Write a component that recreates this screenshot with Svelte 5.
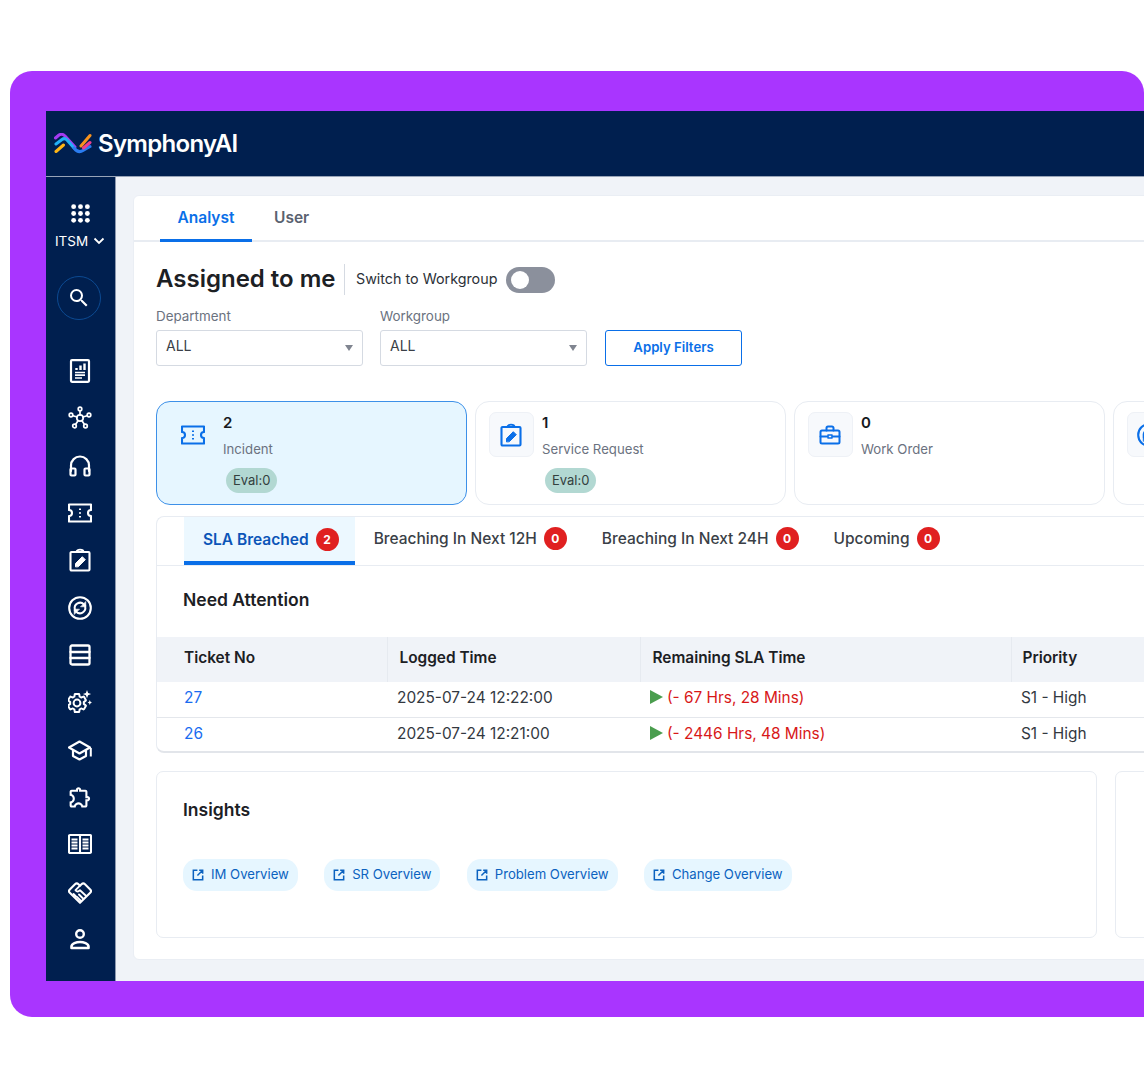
<script>
	const railIcons = ['report', 'hub', 'headset', 'ticket', 'edit', 'sync', 'rows', 'gear', 'school', 'puzzle', 'book', 'hands', 'person'];

	const stats = [
		{ count: 2, label: 'Incident', icon: 'ticket', evalCount: 0, active: true },
		{ count: 1, label: 'Service Request', icon: 'edit', evalCount: 0 },
		{ count: 0, label: 'Work Order', icon: 'case' },
		{ icon: 'sync' }
	];

	const slaTabs = [
		{ label: 'SLA Breached', count: 2 },
		{ label: 'Breaching In Next 12H', count: 0 },
		{ label: 'Breaching In Next 24H', count: 0 },
		{ label: 'Upcoming', count: 0 }
	];

	const tickets = [
		{ no: 27, logged: '2025-07-24 12:22:00', remaining: '(- 67 Hrs, 28 Mins)', priority: 'S1 - High' },
		{ no: 26, logged: '2025-07-24 12:21:00', remaining: '(- 2446 Hrs, 48 Mins)', priority: 'S1 - High' }
	];

	const links = ['IM Overview', 'SR Overview', 'Problem Overview', 'Change Overview'];

	let activeTab = $state('SLA Breached');
	let workgroup = $state(false);
</script>

{#snippet icon(name)}
	<svg class="icon" viewBox="0 0 24 24" fill="none" stroke="currentColor" stroke-width="2" stroke-linejoin="round" stroke-linecap="round">
		{#if name === 'report'}
			<rect x="3" y="1.2" width="18" height="21.6" rx="1" stroke-width="2.2" />
			<path d="M7 13.5h10M7 16.2h10M7 19h7" stroke-width="1.7" stroke-linecap="butt" />
			<path d="M8.5 11V9M12.5 11V6.5M16.5 11V4.5" stroke-width="2.4" stroke-linecap="butt" />
		{:else if name === 'hub'}
			<g stroke-width="1.7">
				<circle cx="12" cy="12" r="3.2" />
				<circle cx="12" cy="3" r="1.8" />
				<circle cx="3" cy="9" r="1.8" />
				<circle cx="21" cy="9" r="1.8" />
				<circle cx="6.5" cy="20" r="1.8" />
				<circle cx="17.5" cy="20" r="1.8" />
				<path d="M12 5v4M5 9.7l4 1.3M19 9.7l-4 1.3M7.7 18.3l2.5-3.700M16.3 18.300l-2.500-3.700" />
			</g>
		{:else if name === 'headset'}
			<path d="M3 17v-5.500a9 9 0 0 1 18 0V17" stroke-width="2.2" />
			<rect x="2.5" y="14.5" width="5" height="7" rx="1" stroke-width="2.2" />
			<rect x="16.5" y="14.5" width="5" height="7" rx="1" stroke-width="2.2" />
		{:else if name === 'ticket'}
			<path d="M1 3.5h22V9a3 3 0 0 0 0 6v5.500H1V15a3 3 0 0 0 0-6z" stroke-width="2.1" />
			<path d="M12 7.5v1.500M12 11.300v1.500M12 15v1.500" stroke-linecap="butt" />
		{:else if name === 'edit'}
			<rect x="2.5" y="4" width="19" height="18.5" rx="1" stroke-width="2.1" />
			<path d="M8.5 4c0-3.200 7-3.200 7 0" stroke-width="1.8" />
			<path d="M7.5 18.500v-3l6.800-6.800 3 3-6.800 6.800z" fill="currentColor" stroke-width="1" />
		{:else if name === 'sync'}
			<circle cx="12" cy="12" r="10.8" stroke-width="2.1" />
			<path d="M6.800 13.200a5.400 5.400 0 0 1 9-5l1.400 1.500M17.200 10.800a5.400 5.400 0 0 1-9 5l-1.400-1.500" stroke-width="2" />
			<path d="M17.800 5.800v5h-5zM6.200 18.200v-5h5z" fill="currentColor" stroke-width="0.6" />
		{:else if name === 'rows'}
			<rect x="2.5" y="2.5" width="19" height="19" rx="1.5" stroke-width="2.3" />
			<path d="M2.500 9h19M2.500 15h19" stroke-width="2.3" />
		{:else if name === 'gear'}
			<path transform="translate(-2.400 1.600) scale(.95)" stroke-width="2.1" d="M19.140 12.940c.04-.3.06-.61.06-.94 0-.32-.02-.64-.07-.94l2.030-1.580a.49.49 0 0 0 .12-.61l-1.920-3.320a.488.488 0 0 0-.59-.22l-2.390.96c-.5-.38-1.030-.7-1.620-.94l-.36-2.540a.484.484 0 0 0-.48-.41h-3.840c-.24 0-.43.17-.47.41l-.36 2.540c-.59.24-1.130.57-1.620.94l-2.390-.96c-.22-.08-.47 0-.59.22L2.740 8.870c-.12.21-.08.47.12.61l2.030 1.580c-.05.3-.09.63-.09.94s.02.64.07.94l-2.030 1.580a.49.49 0 0 0-.12.61l1.920 3.320c.12.22.37.29.59.22l2.390-.96c.5.38 1.030.7 1.620.94l.36 2.540c.05.24.24.41.48.41h3.840c.24 0 .44-.17.47-.41l.36-2.540c.59-.24 1.130-.56 1.620-.94l2.390.96c.22.08.47 0 .59-.22l1.920-3.320c.12-.22.07-.47-.12-.61l-2.010-1.580zM12 15.600c-1.980 0-3.600-1.620-3.600-3.600s1.620-3.600 3.600-3.600 3.600 1.620 3.600 3.600-1.620 3.600-3.600 3.600z" />
			<path d="M19 0l1.100 3 3 1.100-3 1.100-1.100 3-1.100-3-3-1.100 3-1.100zM21.800 10l.7 1.800 1.500.7-1.500.7-.7 1.800-.7-1.800-1.500-.7 1.500-.7z" fill="currentColor" stroke="none" />
		{:else if name === 'school'}
			<path d="M11.500 3.500 1 9.500l10.500 6 10.500-6z" stroke-width="2.2" />
			<path d="M5 12.500v5.500l6.500 3.500L18 18v-5.500" stroke-width="2.2" />
			<path d="M22.800 10v8.500" stroke-width="2" stroke-linecap="butt" />
		{:else if name === 'puzzle'}
			<path fill="currentColor" stroke="none" d="M10.500 4.500c.28 0 .5.22.5.5v2h6v6h2c.28 0 .5.22.5.5s-.22.5-.5.5h-2v6h-2.120c-.68-1.750-2.390-3-4.380-3s-3.700 1.250-4.380 3H4v-2.120c1.750-.68 3-2.390 3-4.380 0-1.990-1.240-3.700-2.990-4.380L4 7h6V5c0-.28.22-.5.5-.5m0-2C9.120 2.500 8 3.620 8 5H4c-1.100 0-1.990.9-1.990 2v3.800h.29c1.490 0 2.700 1.210 2.700 2.700s-1.210 2.700-2.700 2.700H2V20c0 1.100.9 2 2 2h3.800v-.3c0-1.490 1.210-2.700 2.700-2.700s2.700 1.210 2.700 2.700v.3H17c1.100 0 2-.9 2-2v-4c1.380 0 2.500-1.120 2.500-2.500S20.380 11 19 11V7c0-1.100-.9-2-2-2h-4c0-1.380-1.120-2.500-2.500-2.500z" transform="translate(-.5 -.5) scale(1.050)" />
		{:else if name === 'book'}
			<rect x="1" y="3" width="22" height="18" rx="1" stroke-width="2.1" />
			<path d="M12 3v18" stroke-width="2.1" />
			<path d="M3.500 7.500h6M3.500 10.500h6M3.500 13.500h6M3.500 16.500h6M14.500 7.500h6M14.500 10.500h6M14.500 13.500h6M14.500 16.500h6" stroke-width="1.8" stroke-linecap="butt" />
		{:else if name === 'hands'}
			<path d="M12 22.800 1.800 12.800c-1-1-1-2.300 0-3.300L7 4.200c1-1 2.500-1 3.500 0L12 5.700l1.500-1.500c1-1 2.500-1 3.500 0l5.200 5.300c1 1 1 2.300 0 3.300z" stroke-width="2.1" />
			<path d="M12 5.700 7.500 10.200c1.500 2 3 1.500 4.500 0l6.200 5.800M15 18.500l-4-4M12.500 20.500l-3.500-3.500M8 16.500 5.500 14" stroke-width="1.9" />
		{:else if name === 'person'}
			<circle cx="12" cy="7" r="3.8" stroke-width="2.4" />
			<path d="M3.500 21v-1.500c0-3 5-4.500 8.500-4.500s8.500 1.500 8.500 4.500V21z" stroke-width="2.6" />
		{:else if name === 'case'}
			<rect x="2.5" y="7.5" width="19" height="13" rx="1.5" />
			<path d="M8.500 7.500V5a1.500 1.500 0 0 1 1.500-1.500h4A1.500 1.500 0 0 1 15.500 5v2.500M2.500 13.500h6.500M15 13.500h6.500" />
			<rect x="10" y="12" width="4" height="3" stroke-width="1.6" />
		{/if}
	</svg>
{/snippet}

<div class="frame">
	<div class="app">
		<header class="topbar">
			<svg class="logo" viewBox="0 0 38 22" fill="none" stroke-width="3" stroke-linecap="round" stroke-linejoin="round">
				<path d="M1.500 5 5 2c2-1.200 4-1 6 1l10 11" stroke="#a33bf0" />
				<path d="M2 11l6-4.500c2-1.500 3.500-1 5 .5l7 8" stroke="#22b0f5" />
				<path d="M20 15c3 4 6 4.500 9 2.500l7-4" stroke="#2a7cf0" />
				<path d="M2 18.500l7.500-6.500" stroke="#fdb515" />
				<path d="M27 13 36 2.500" stroke="#f7931e" />
				<path d="M29.500 15 36 9.500" stroke="#ec3e8f" />
			</svg>
			<span class="brand">SymphonyAI</span>
		</header>
		<div class="body">
			<nav class="rail">
				<svg class="apps" viewBox="0 0 18 18" fill="#fff">
					{#each [2.5, 9, 15.5] as cy}
						{#each [2.5, 9, 15.5] as cx}
							<circle {cx} {cy} r="2.3" />
						{/each}
					{/each}
				</svg>
				<div class="module">
					ITSM
					<svg viewBox="0 0 12 8" fill="none" stroke="#fff" stroke-width="1.8"><path d="M1.500 1.500 6 6l4.500-4.500" /></svg>
				</div>
				<div class="search">
					<svg viewBox="0 0 24 24" fill="#fff"><path d="M15.500 14h-.79l-.28-.27A6.471 6.471 0 0 0 16 9.500 6.500 6.500 0 1 0 9.500 16c1.610 0 3.090-.59 4.230-1.570l.27.28v.79l5 4.990L20.490 19l-4.990-5zm-6 0C7.010 14 5 11.990 5 9.500S7.010 5 9.500 5 14 7.010 14 9.500 11.990 14 9.500 14z" /></svg>
				</div>
				<ul class="rail-list">
					{#each railIcons as name}
						<li>{@render icon(name)}</li>
					{/each}
				</ul>
			</nav>

			<main class="main">
				<section class="sheet">
					<div class="role-tabs">
						<button class="role-tab active">Analyst</button>
						<button class="role-tab">User</button>
					</div>

					<div class="content">
						<div class="heading">
							<h1>Assigned to me</h1>
							<span class="switch-label">Switch to Workgroup</span>
							<button class="toggle" class:on={workgroup} aria-label="Switch to Workgroup" onclick={() => (workgroup = !workgroup)}><i></i></button>
						</div>

						<div class="filters">
							<div class="field">
								<span>Department</span>
								<div class="select">ALL</div>
							</div>
							<div class="field">
								<span>Workgroup</span>
								<div class="select">ALL</div>
							</div>
							<button class="apply">Apply Filters</button>
						</div>

						<div class="stats">
							{#each stats as stat}
								<div class="stat" class:active={stat.active}>
									<div class="stat-icon">{@render icon(stat.icon)}</div>
									{#if stat.label}
										<div class="stat-text">
											<strong>{stat.count}</strong>
											<span>{stat.label}</span>
											{#if stat.evalCount !== undefined}
												<em>Eval:{stat.evalCount}</em>
											{/if}
										</div>
									{/if}
								</div>
							{/each}
						</div>

						<div class="panel">
							<div class="sla-tabs">
								{#each slaTabs as tab}
									<button class="sla-tab" class:active={activeTab === tab.label} onclick={() => (activeTab = tab.label)}>
										{tab.label}
										<b>{tab.count}</b>
									</button>
								{/each}
							</div>
							<h2>Need Attention</h2>
							<table>
								<thead>
									<tr>
										<th>Ticket No</th>
										<th>Logged Time</th>
										<th>Remaining SLA Time</th>
										<th>Priority</th>
									</tr>
								</thead>
								<tbody>
									{#each tickets as t}
										<tr>
											<td><a href="#{t.no}">{t.no}</a></td>
											<td>{t.logged}</td>
											<td class="late"><i></i>{t.remaining}</td>
											<td>{t.priority}</td>
										</tr>
									{/each}
								</tbody>
							</table>
						</div>

						<div class="lower">
							<div class="insights">
								<h2>Insights</h2>
								<div class="links">
									{#each links as link}
										<span class="link">
											<svg viewBox="0 0 24 24" fill="none" stroke="currentColor" stroke-width="2.6"><path d="M11 4H4v16h16v-7M14 4h6v6M20 4l-9 9" /></svg>
											{link}
										</span>
									{/each}
								</div>
							</div>
							<div class="insights side"></div>
						</div>
					</div>
				</section>
			</main>
		</div>
	</div>
</div>

<style>
	:global(body) {
		margin: 0;
		background: #fff;
		overflow: hidden;
	}

	.frame {
		box-sizing: border-box;
		width: 1134px;
		height: 946px;
		margin: 71px 0 0 10px;
		padding: 40px 0 36px 36px;
		background: #a935ff;
		border-radius: 22px 22px 0 22px;
		overflow: hidden;
		font-family: Inter, 'Liberation Sans', sans-serif;
		color: #1c2024;
	}

	.app {
		height: 870px;
		display: flex;
		flex-direction: column;
		overflow: hidden;
	}

	.topbar {
		flex: none;
		box-sizing: border-box;
		height: 66px;
		padding-left: 8px;
		display: flex;
		align-items: center;
		background: #001f4f;
		border-bottom: 1px solid #98a4b8;
	}

	.logo {
		width: 38px;
		height: 22px;
		margin-right: 6px;
	}

	.brand {
		font-size: 24px;
		font-weight: 600;
		letter-spacing: -0.7px;
		color: #fff;
	}

	.body {
		flex: 1;
		display: flex;
		min-height: 0;
	}

	.rail {
		flex: none;
		box-sizing: border-box;
		width: 70px;
		padding: 27px 1px 0 0;
		display: flex;
		flex-direction: column;
		align-items: center;
		background: #001f4f;
		border-right: 1px solid #8d99b0;
		color: #fff;
	}

	.apps {
		width: 19px;
		height: 19px;
		flex: none;
	}

	.module {
		display: flex;
		align-items: center;
		gap: 5px;
		margin-top: 10px;
		font-size: 13.5px;
		line-height: 16px;
	}

	.module svg {
		width: 12px;
		height: 8px;
	}

	.search {
		box-sizing: border-box;
		width: 44px;
		height: 44px;
		margin: 27px 3px 0 0;
		display: flex;
		align-items: center;
		justify-content: center;
		border: 1px solid #0c4a92;
		border-radius: 50%;
	}

	.search svg {
		width: 24px;
		height: 24px;
	}

	.rail-list {
		list-style: none;
		margin: 27.5px 0 0;
		padding: 0;
	}

	.rail-list li {
		height: 47.33px;
		display: flex;
		align-items: center;
		justify-content: center;
	}

	.icon {
		width: 24px;
		height: 24px;
	}

	.main {
		flex: 1;
		min-width: 0;
		padding: 18px 0 21px 18px;
		background: #f0f3f8;
	}

	.sheet {
		box-sizing: border-box;
		width: 1100px;
		height: 100%;
		margin-left: -1px;
		background: #fff;
		border-radius: 6px;
		border: 1px solid #eaeef4;
	}

	.role-tabs {
		height: 46px;
		padding-left: 26px;
		display: flex;
		gap: 22px;
		border-bottom: 2px solid #e8ecf2;
		box-sizing: border-box;
	}

	.role-tab {
		padding: 0;
		border: 0;
		border-bottom: 3px solid transparent;
		margin-bottom: -2px;
		background: none;
		font: 600 15.5px/1 Inter, sans-serif;
		color: #5a6270;
		cursor: pointer;
	}

	.role-tab.active {
		width: 92px;
		color: #0a6fe8;
		border-bottom-color: #0a6fe8;
	}

	.content {
		padding: 22px 0 0 22px;
	}

	.heading {
		display: flex;
		align-items: center;
		height: 31px;
	}

	h1 {
		box-sizing: border-box;
		width: 189px;
		height: 31px;
		margin: 0;
		border-right: 1px solid #d5dae2;
		font-size: 24px;
		font-weight: 600;
		line-height: 29px;
		color: #1c2024;
	}

	.switch-label {
		margin-left: 11px;
		padding-bottom: 2px;
		font-size: 14.3px;
		color: #2c3138;
	}

	.toggle {
		position: relative;
		width: 49px;
		height: 26px;
		margin-left: 9px;
		padding: 0;
		border: 0;
		border-radius: 13px;
		background: #8b909c;
		cursor: pointer;
	}

	.toggle i {
		position: absolute;
		left: 5px;
		top: 4px;
		width: 18px;
		height: 18px;
		border-radius: 50%;
		background: #fff;
	}

	.toggle.on i {
		left: 26px;
	}

	.filters {
		margin-top: 13px;
		display: flex;
		align-items: flex-end;
	}

	.field {
		width: 207px;
		margin-right: 17px;
		display: flex;
		flex-direction: column;
		gap: 6px;
		font-size: 13.4px;
		line-height: 16px;
		color: #6b7280;
	}

	.select {
		position: relative;
		box-sizing: border-box;
		height: 36px;
		padding-left: 9px;
		border: 1px solid #d5dae2;
		border-radius: 3px;
		font-size: 14px;
		line-height: 30px;
		color: #3a3f47;
	}

	.select::after {
		content: '';
		position: absolute;
		right: 9px;
		top: 14px;
		border: 4px solid transparent;
		border-top: 6px solid #808590;
		border-bottom: 0;
	}

	.apply {
		box-sizing: border-box;
		width: 137px;
		height: 36px;
		margin-left: 1px;
		padding: 0 0 2px;
		border: 1px solid #0a6fe8;
		border-radius: 3px;
		background: #fff;
		font: 600 13.2px Inter, sans-serif;
		color: #0a6fe8;
	}

	.stats {
		margin-top: 35px;
		display: grid;
		grid-template-columns: repeat(4, 310.7px);
		column-gap: 8.3px;
	}

	.stat {
		box-sizing: border-box;
		height: 104px;
		padding: 10px 13px;
		display: flex;
		gap: 8px;
		border: 1px solid #e8ecf2;
		border-radius: 14px;
	}

	.stat.active {
		background: #e6f6ff;
		border-color: #3d90e8;
	}

	.stat-icon {
		box-sizing: border-box;
		flex: none;
		width: 45px;
		height: 45px;
		display: flex;
		align-items: center;
		justify-content: center;
		background: #f7f9fc;
		border: 1px solid #eef1f6;
		border-radius: 7px;
		color: #0a6fe8;
	}

	.stat.active .stat-icon {
		background: none;
		border-color: transparent;
	}

	.stat-text {
		display: flex;
		flex-direction: column;
		align-items: flex-start;
	}

	.stat-text strong {
		font-size: 15px;
		font-weight: 600;
		line-height: 22px;
		color: #16191d;
	}

	.stat-text span {
		margin-top: 5px;
		font-size: 13.2px;
		line-height: 20px;
		color: #6b7280;
	}

	.stat-text em {
		margin: 9px 0 0 3px;
		padding: 0 7px;
		font-size: 13px;
		font-style: normal;
		line-height: 25px;
		background: #b2d8d2;
		border-radius: 13px;
		color: #33403e;
	}

	.panel {
		margin-top: 11px;
		height: 237px;
		box-sizing: border-box;
		border: 1px solid #e8ecf2;
		border-bottom: 2px solid #e2e5ea;
		border-radius: 8px 0 0 8px;
		border-right: 0;
	}

	.sla-tabs {
		box-sizing: border-box;
		height: 49px;
		padding-left: 27px;
		display: flex;
		border-bottom: 1px solid #e8ecf2;
	}

	.sla-tab {
		display: flex;
		align-items: center;
		gap: 7px;
		height: 48px;
		padding: 0 16px 2px 19px;
		border: 0;
		border-bottom: 4px solid transparent;
		background: none;
		font: 500 15.5px Inter, sans-serif;
		color: #3a3f47;
		cursor: pointer;
	}

	.sla-tab.active {
		padding-bottom: 0;
		background: #ecf8ff;
		border-bottom-color: #0a6fe8;
		font-weight: 600;
		color: #0b55b8;
	}

	.sla-tab b {
		width: 23px;
		height: 23px;
		border-radius: 50%;
		background: #e02020;
		color: #fff;
		font-size: 12px;
		font-weight: 700;
		line-height: 23px;
		text-align: center;
	}

	h2 {
		margin: 0;
		font-size: 17.5px;
		font-weight: 600;
		line-height: 24px;
		color: #1c2024;
	}

	.panel h2 {
		padding: 22px 0 25px 26px;
	}

	table {
		width: 1100px;
		table-layout: fixed;
		border-collapse: collapse;
		font-size: 15.4px;
	}

	th,
	td {
		box-sizing: border-box;
	}

	th {
		height: 45px;
		padding: 0 0 4px 12px;
		text-align: left;
		font-weight: 600;
		background: #f0f3f8;
		border-right: 1px solid #e6eaf0;
		color: #1c2024;
	}

	th:first-child {
		width: 230px;
		padding-left: 27px;
	}

	th:nth-child(2) {
		width: 253px;
	}

	th:nth-child(3) {
		width: 371px;
	}

	th:last-child {
		padding-left: 11px;
	}

	td {
		height: 35px;
		padding: 0 0 4px 10px;
		border-bottom: 1px solid #e4e7ec;
		color: #33383f;
	}

	tr:last-child td {
		height: 36px;
		padding-bottom: 3px;
		border-bottom: 0;
	}

	td:first-child {
		padding-left: 27px;
	}

	td a {
		color: #1a6cf0;
		text-decoration: none;
	}

	.late {
		color: #d81818;
	}

	.late i {
		display: inline-block;
		margin-right: 4px;
		border: 7px solid transparent;
		border-left: 13px solid #4a9d4e;
		border-right: 0;
		vertical-align: -1px;
	}

	.lower {
		margin-top: 18px;
		display: flex;
		gap: 18px;
	}

	.insights {
		box-sizing: border-box;
		flex: none;
		width: 941px;
		height: 167px;
		padding: 26px 26px 0;
		border: 1px solid #e8ecf2;
		border-radius: 7px;
	}

	.links {
		margin-top: 37px;
		display: flex;
		gap: 26.3px;
	}

	.link {
		box-sizing: border-box;
		display: flex;
		align-items: center;
		gap: 6px;
		height: 32px;
		padding: 0 9px 2px 8px;
		border-radius: 14px;
		background: #e6f6ff;
		font-size: 13.15px;
		color: #0b62c0;
	}

	.link svg {
		width: 14px;
		height: 14px;
		margin-top: 2px;
	}
</style>
